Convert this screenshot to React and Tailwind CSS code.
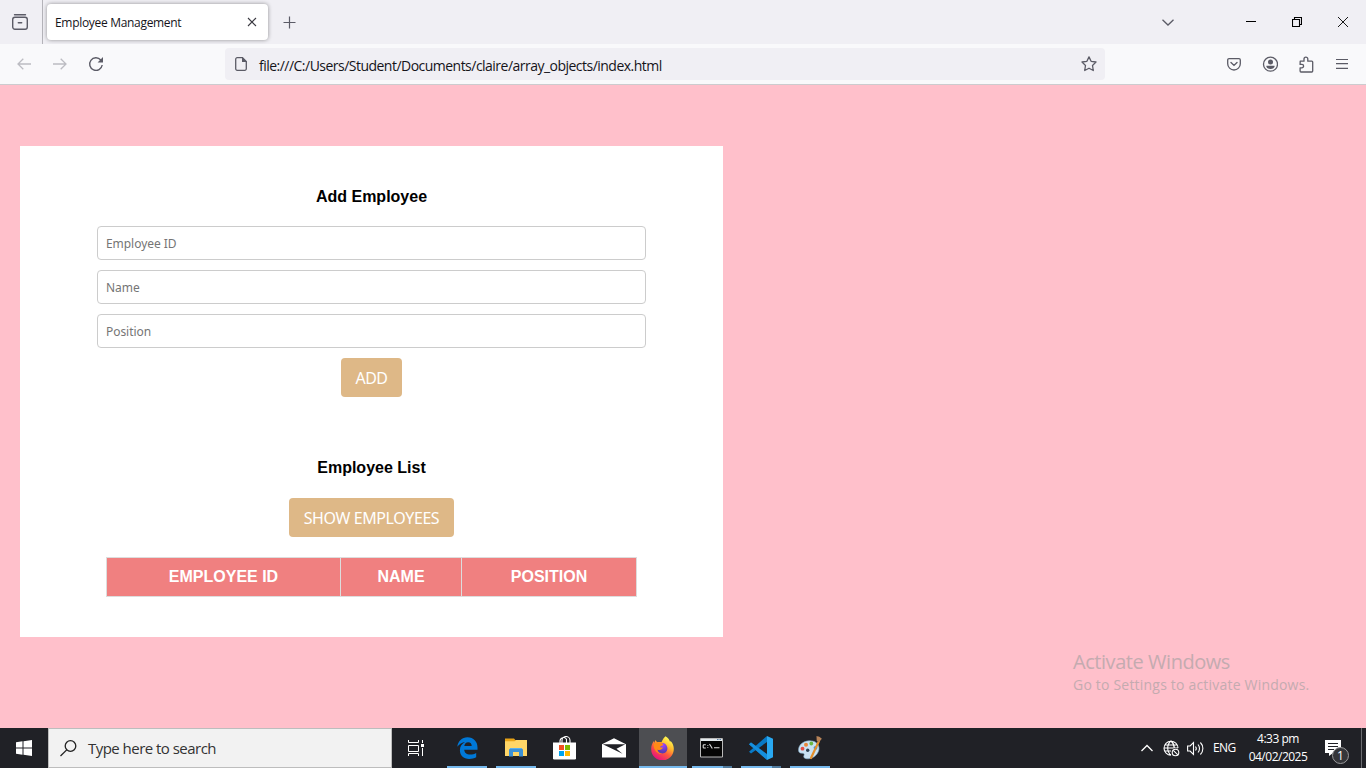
const ui = 'font-["Open_Sans",sans-serif]';

function Ico({ w, h, vb, className = "", children }) {
  return (
    <svg width={w} height={h} viewBox={vb || `0 0 ${w} ${h}`} className={`block shrink-0 ${className}`} fill="none">
      {children}
    </svg>
  );
}

function TabBar() {
  return (
    <div className="flex h-11 shrink-0 items-center bg-[#f0eff4]">
      <div className="flex h-full w-[43px] items-center border-r border-[#b4b3b9] pl-3">
        <Ico w={16} h={16} className="stroke-[#5b5b66]">
          <path d="M2.5 .8h11" strokeWidth="1.4" strokeLinecap="round" />
          <rect x=".7" y="3.2" width="14.6" height="12" rx="2.2" strokeWidth="1.4" />
          <path d="M6.3 8.7h3.4" strokeWidth="1.4" strokeLinecap="round" />
        </Ico>
      </div>
      <div className="ml-1 flex h-9 w-[221px] items-center rounded bg-white pl-2 shadow-[0_0_4px_rgba(0,0,0,0.4)]">
        <span className="w-[192px] whitespace-nowrap pt-[2px] text-[12px] tracking-[-0.31px] text-[#15141a]">Employee Management</span>
        <Ico w={10} h={10} className="stroke-[#3b3a42]">
          <path d="M1 1l8 8M9 1l-8 8" strokeWidth="1.1" />
        </Ico>
      </div>
      <Ico w={13} h={13} className="ml-[15px] stroke-[#5b5b66]">
        <path d="M6.5 .5v12M.5 6.5h12" strokeWidth="1.2" />
      </Ico>
      <Ico w={12} h={7} className="ml-auto stroke-[#5b5b66]">
        <path d="M.5 .8L6 6l5.500-5.200" strokeWidth="1.3" />
      </Ico>
      <Ico w={10} h={10} className="ml-[72px] stroke-black">
        <path d="M0 4.500h10" />
      </Ico>
      <Ico w={10} h={10} className="ml-9 stroke-black">
        <path d="M.5 2.500h7v7h-7zM2.500 2.500v-2h7v7h-2" strokeWidth="1.1" />
      </Ico>
      <Ico w={10} h={10} className="ml-9 mr-[18px] stroke-black">
        <path d="M0 0l10 10M10 0L0 10" strokeWidth=".9" />
      </Ico>
    </div>
  );
}

function NavBar() {
  return (
    <div className="flex h-[41px] shrink-0 items-center border-b border-[#cccccf] bg-[#f9f9fb]">
      <Ico w={14} h={12} className="ml-[17px] stroke-[#bcbcc2]">
        <path d="M14 6H1M6.300 .7L1 6l5.300 5.300" strokeWidth="1.300" />
      </Ico>
      <Ico w={14} h={12} className="ml-[22px] stroke-[#bcbcc2]">
        <path d="M0 6h13M7.700 .7L13 6l-5.300 5.300" strokeWidth="1.300" />
      </Ico>
      <Ico w={16} h={16} className="ml-[21px] stroke-[#5b5b66]">
        <path d="M12.800 4A6.300 6.300 0 1 0 14.200 9" strokeWidth="1.400" />
        <path d="M15 1v5.400H9.600z" fill="#5b5b66" stroke="none" />
      </Ico>
      <div className="ml-[121px] flex h-8 w-[880px] items-center rounded bg-[#f0eff4] pl-[10px]">
        <Ico w={12} h={14}>
          <path d="M2.200 .7h5.300l3.800 3.800v7.300a1.500 1.500 0 0 1-1.500 1.500H2.200A1.500 1.500 0 0 1 .7 11.800V2.200A1.500 1.500 0 0 1 2.200 .7z" stroke="#5b5b66" strokeWidth="1.300" />
          <path d="M7 0l5 5H7z" fill="#5b5b66" />
        </Ico>
        <span className="ml-3 whitespace-nowrap pt-[2px] text-[14px] tracking-[-0.52px] text-[#15141a]">
          file:///C:/Users/Student/Documents/claire/array_objects/index.html
        </span>
        <Ico w={16} h={16} className="ml-auto mr-2 stroke-[#5b5b66]">
          <path d="M8 .9l2.100 4.400 4.900.7-3.500 3.500.8 5-4.300-2.300-4.300 2.300.8-5L1 6l4.900-.7z" strokeWidth="1.300" strokeLinejoin="round" />
        </Ico>
      </div>
      <Ico w={14} h={13} className="ml-[122px] stroke-[#5b5b66]">
        <path d="M2 .7h10A1.300 1.300 0 0 1 13.300 2v3.700a6.300 6.300 0 0 1-12.600 0V2A1.300 1.300 0 0 1 2 .7z" strokeWidth="1.300" />
        <path d="M4 4.500l3 2.900 3-2.900" strokeWidth="1.400" strokeLinecap="round" />
      </Ico>
      <Ico w={16} h={16} className="ml-[21px]">
        <circle cx="8.5" cy="8.2" r="7" stroke="#5b5b66" strokeWidth="1.300" />
        <circle cx="8.5" cy="6" r="2.500" fill="#5b5b66" />
        <path d="M4.500 9.700h8c.4 1.800-1.500 3.300-4 3.300S4.100 11.500 4.500 9.700z" fill="#5b5b66" />
      </Ico>
      <Ico w={15} h={17} className="ml-[21px] stroke-[#5b5b66]">
        <path d="M1.200 5.200H5V3a1.800 1.800 0 0 1 3.800 0v2.200h4a.9.9 0 0 1 .9.900v9a.9.9 0 0 1-.9.900H2a.9.900 0 0 1-.9-.9v-3.300h1.800a1.700 1.700 0 0 0 0-3.400H1.100z" strokeWidth="1.300" strokeLinejoin="round" />
      </Ico>
      <Ico w={12} h={12} className="ml-[22px] stroke-[#5b5b66]">
        <path d="M0 1.500h12M0 5.700h12M0 10.300h12" strokeWidth="1.200" />
      </Ico>
    </div>
  );
}

const fields = ["Employee ID", "Name", "Position"];

function Button({ children, className }) {
  return (
    <button className={`flex h-[39px] items-center justify-center whitespace-nowrap rounded bg-[#deb887] font-["Noto_Sans",sans-serif] text-[16px] text-white ${className}`}>
      {children}
    </button>
  );
}

function Page() {
  return (
    <main className='relative flex min-h-0 flex-1 items-start bg-[#ffc0cb] pl-5 pt-[61px] font-["Liberation_Sans",Arial,sans-serif]'>
      <section className="flex h-[491px] w-[703px] flex-col items-center bg-white pt-[42px]">
        <h3 className="text-[16px] font-bold leading-[18px] text-black">Add Employee</h3>
        <div className="mt-5 flex w-[549px] flex-col gap-[10px]">
          {fields.map((f) => (
            <input
              key={f}
              placeholder={f}
              className='h-[34px] w-full rounded border border-[#cccccc] px-2 font-["Noto_Sans",sans-serif] text-[12px] tracking-[-0.05px] placeholder:text-[#757575]'
            />
          ))}
        </div>
        <Button className="mt-[10px] w-[61px] tracking-[-0.6px]">ADD</Button>
        <h3 className="mt-[62px] text-[16px] font-bold leading-[18px] text-black">Employee List</h3>
        <Button className="mt-[21px] w-[165px] tracking-[-0.4px]">SHOW EMPLOYEES</Button>
        <table className="mt-5 h-10 w-[531px] table-fixed border-collapse text-[16px] leading-[18px] text-white">
          <thead>
            <tr className="bg-[#f08080]">
              <th className="w-[234px] border border-[#dddddd] p-0">EMPLOYEE ID</th>
              <th className="w-[121px] border border-[#dddddd] p-0">NAME</th>
              <th className="border border-[#dddddd] p-0">POSITION</th>
            </tr>
          </thead>
        </table>
      </section>
      <div className={`absolute left-[1073px] top-[563px] whitespace-nowrap text-[#c4abb0] ${ui}`}>
        <div className="text-[20px] leading-[27px] tracking-[-0.45px]">Activate Windows</div>
        <div className="pt-px text-[14px] leading-[18px] tracking-[0.2px]">Go to Settings to activate Windows.</div>
      </div>
    </main>
  );
}

function Edge() {
  return (
    <Ico w={21} h={22}>
      <path d="M.3 9.800C1 4 5 .2 10.500 .2c6 0 10 4.300 10 10.200v2.300H7.200c.2 3.100 2.600 4.900 6 4.900 2.200 0 4.200-.6 6-1.700v4.400c-2 1.100-4.300 1.600-7 1.600-5.800 0-9.300-3.600-9.300-8.700 0-3.600 2-6.600 5.200-8.100C5.200 5.700 2.200 7.200.3 9.800zM7.300 9h7.400c0-2.300-1.200-3.800-3.500-3.800-2.200 0-3.600 1.500-3.900 3.800z" fill="#0078d7" />
    </Ico>
  );
}

function Explorer() {
  return (
    <Ico w={22} h={19}>
      <path d="M0 .5h9l1.500 1.700H22V18H0z" fill="#e8a317" />
      <path d="M0 3.200h9.500L11 2h11v16H0z" fill="#ffd667" />
      <path d="M4 18.500v-6.500A1.500 1.500 0 0 1 5.500 10.500h11A1.500 1.500 0 0 1 18 12v6.500h-4V14H8v4.500z" fill="#3c91d6" />
      <path d="M5 10.500h12" stroke="#58b0ee" />
    </Ico>
  );
}

function Store() {
  return (
    <Ico w={24} h={24}>
      <path d="M7 7V4.800a3.500 3.500 0 0 1 6.500-1.500V7M9 7V4.500a4 4 0 0 1 8 0V7" stroke="#fff" strokeWidth="1.100" />
      <path d="M0 6.500h23v15.700a1.300 1.300 0 0 1-1.300 1.300H1.300A1.300 1.300 0 0 1 0 22.200z" fill="#fff" />
      <path d="M6 9h5v5H6z" fill="#f25022" />
      <path d="M12 9h5v5h-5z" fill="#7fba00" />
      <path d="M6 15h5v5H6z" fill="#00a4ef" />
      <path d="M12 15h5v5h-5z" fill="#ffb900" />
    </Ico>
  );
}

function Mail() {
  return (
    <Ico w={24} h={20}>
      <path d="M0 6.200L12 .3l12 5.900v13.300H0z" fill="#fff" />
      <path d="M.8 6.200h22.500L14.500 10.800l6 5z" fill="#202126" />
    </Ico>
  );
}

function Firefox() {
  return (
    <Ico w={24} h={24} vb="0 0 24 24">
      <defs>
        <linearGradient id="ffBody" x1="18" y1="2" x2="5" y2="22" gradientUnits="userSpaceOnUse">
          <stop offset=".05" stopColor="#fff44f" />
          <stop offset=".35" stopColor="#ffb42b" />
          <stop offset=".62" stopColor="#ff5a3c" />
          <stop offset="1" stopColor="#e8147b" />
        </linearGradient>
        <radialGradient id="ffGlobe" cx="12" cy="9" r="7" gradientUnits="userSpaceOnUse">
          <stop stopColor="#a044ff" />
          <stop offset="1" stopColor="#5b3bb4" />
        </radialGradient>
      </defs>
      <path d="M14.500 .3c2.600 1.500 4 3.500 4.400 5.200l.9-.3c2 2 3.100 5 3 7.800A11.300 11.300 0 0 1 .2 13.200C.1 9.900 1.300 7 3 5l.7 2 .5-3 2 2.300c1.500-.7 3-.4 4.300 0 1-2.700 2.300-4.400 4-6z" fill="url(#ffBody)" />
      <path d="M9 7.600c3.200-1.700 6.800.4 7.300 3.900.6 3.500-2 6-5 5.900-3.300 0-5.300-2.100-5-4.700 1.100.8 2.300.6 3.900-.5-1.400-.2-2.400-.5-2.700-1.300.6-.5 2.500-.7 3.200-1.700-.4-.5-1-.9-1.700-1.600z" fill="url(#ffGlobe)" />
      <path d="M2.500 8.500C4.500 6 7.800 6 10.500 6.500L12.300 8.400c-.2 1.300-2.300 1.500-3.300 2.300.2.800 1.400 1 3 .9-1 2.300-3.600 3.200-5.700 1.800.4 2.400 2.300 4.300 5.300 4.500-4 1-9-3-9.100-9.400z" fill="#ff8a16" />
    </Ico>
  );
}

function Cmd() {
  return (
    <Ico w={24} h={20}>
      <path d="M.5 .5h22v18.500H.5z" fill="#050505" stroke="#b9b9b9" />
      <path d="M1 1h21v2H1z" fill="#e3e9ed" />
      <path d="M17 1.500h4" stroke="#5b7fa5" strokeDasharray="1 .5" />
      <path d="M5.800 6.800H4a.8.8 0 0 0-.8.8v1.600a.8.800 0 0 0 .8.8h1.800M7.800 6.900v.9M7.800 9.200v.9M9.500 6l2.800 4.500M14 9.700h5.500" stroke="#ddd" strokeWidth="1.100" />
    </Ico>
  );
}

function Code() {
  return (
    <Ico w={24} h={24}>
      <path d="M18 0l6 2.800v18.400L18 24z" fill="#29a9f2" />
      <path d="M0 8.300l2-1.700L18 18v6z" fill="#0a7fd0" />
      <path d="M0 15.700l2 1.700L18 6V0z" fill="#087ac7" />
      <path d="M0 8.300l2-1.700 16 11.800v5.400z" fill="#168fdd" />
    </Ico>
  );
}

function Paint() {
  return (
    <Ico w={24} h={24}>
      <path d="M11 4.800c5.800-.3 9.500 2.500 10 7 .4 5-4.500 10.700-10.500 11-3.300.2-5.500-1.100-4.600-3.100.9-1.900-.1-2.600-2.100-2.500-2.200.1-3.400-1-3.300-3.400C.7 9 5 5.100 11 4.800z" fill="#c9e2f3" stroke="#7fa7c4" strokeWidth=".6" />
      <circle cx="8" cy="8.700" r="2" fill="#e8873b" />
      <circle cx="13.300" cy="7.500" r="1.900" fill="#6ab743" />
      <circle cx="4.500" cy="12.700" r="1.900" fill="#e64c43" />
      <circle cx="17.500" cy="11.800" r="1.900" fill="#3e8fd8" />
      <circle cx="9.700" cy="14.200" r="1.700" fill="#2d4154" />
      <path d="M21 5L13 22" stroke="#e38f2c" strokeWidth="2.200" strokeLinecap="round" />
      <path d="M18.500 0c1.200.8 2 0 3.200 1l2.200 1.800-3 3.500-2.200-1.500z" fill="#b78358" />
    </Ico>
  );
}

const apps = [
  { Icon: Edge, bar: "full" },
  { Icon: Explorer, bar: "full" },
  { Icon: Store },
  { Icon: Mail },
  { Icon: Firefox, bar: "active" },
  { Icon: Cmd, bar: "split" },
  { Icon: Code, bar: "split" },
  { Icon: Paint, bar: "full" },
];

function TaskButton({ Icon, bar }) {
  return (
    <div className={`flex h-10 w-12 shrink-0 flex-col items-center ${bar === "active" ? "bg-[#4d4e52]" : ""}`}>
      <div className="flex h-[38px] items-center pt-px">
        <Icon />
      </div>
      {bar === "active" && <div className="h-0.5 w-12 bg-[#76b9ed]" />}
      {bar === "full" && <div className="h-0.5 w-10 bg-[#76b9ed]" />}
      {bar === "split" && (
        <div className="flex h-0.5 w-10">
          <div className="w-[31px] bg-[#76b9ed]" />
          <div className="w-[9px] bg-[#517b9d]" />
        </div>
      )}
    </div>
  );
}

function Taskbar() {
  return (
    <footer className="flex h-10 shrink-0 items-center bg-[#202126] text-white">
      <div className="flex w-12 justify-center">
        <Ico w={16} h={16}>
          <path d="M0 2.200L6.500 1.300v6.200H0zM7.500 1.200L16 0v7.500H7.500zM0 8.500h6.500v6.200L0 13.800zM7.500 8.500H16V16l-8.500-1.200z" fill="#fff" />
        </Ico>
      </div>
      <div className="flex h-10 w-[344px] items-center border border-[#bdbdbd] bg-[#f2f2f2] pl-[11px]">
        <Ico w={17} h={17} className="stroke-[#222]">
          <circle cx="10.500" cy="6" r="5.300" strokeWidth="1.300" />
          <path d="M6.700 9.900L.5 16" strokeWidth="1.300" />
        </Ico>
        <span className="ml-[11px] whitespace-nowrap text-[15px] tracking-[-0.53px] text-[#333]">Type here to search</span>
      </div>
      <div className="mr-[3px] flex w-12 justify-center">
        <Ico w={16} h={16} className="stroke-white">
          <path d="M.5 0v2.500h10V0M.5 5.500h10v6H.5zM.5 16v-2.500h10V16M14.500 0v3M14.500 8v8" />
          <path d="M13 4h3v3h-3z" fill="#fff" stroke="none" />
        </Ico>
      </div>
      <div className="flex gap-px">
        {apps.map((a, i) => (
          <TaskButton key={i} {...a} />
        ))}
      </div>
      <Ico w={12} h={8} className="ml-auto stroke-white">
        <path d="M.5 7L6 1.500 11.500 7" strokeWidth="1.300" />
      </Ico>
      <Ico w={17} h={17} className="ml-[10px] stroke-white">
        <path d="M8 15.200A7 7 0 1 1 15 8M8 15.200C5.500 13.200 4.700 11 4.700 8S5.500 3 8 1M8 1c2.300 2 3.300 4 3.300 7M1.500 5h13M1.500 11H8M1 8h14" strokeWidth="1.100" />
        <circle cx="12.500" cy="12.500" r="4.300" fill="#202126" stroke="none" />
        <circle cx="12.500" cy="12.500" r="3.300" strokeWidth="1.100" />
        <path d="M10.300 10.300l4.500 4.500" strokeWidth="1.100" />
      </Ico>
      <Ico w={17} h={15} className="ml-[7px] stroke-white">
        <path d="M.6 5h2.500L6.500 1.500v12L3.100 10H.6z" strokeWidth="1.100" />
        <path d="M8.500 5.500c.8 1 .8 3 0 4M11 3.500c2 2.200 2 5.800 0 8M13.400 1.500c3.300 3.400 3.300 8.600 0 12" strokeWidth="1.100" />
      </Ico>
      <span className="ml-[9px] w-6 whitespace-nowrap text-[12px] tracking-[-0.6px]">ENG</span>
      <div className="ml-[9px] w-[64px] whitespace-nowrap text-center text-[12px] leading-[18px] tracking-[-0.5px]">
        <div>4:33 pm</div>
        <div>04/02/2025</div>
      </div>
      <div className="relative ml-[15px] mr-[11px] h-[26px] w-[25px] translate-y-[5px]">
        <Ico w={25} h={26}>
          <path d="M0 0h16v13H8l-4 3v-3H0z" fill="#fff" />
          <path d="M3 3.500h10M3 6.500h10M3 9.500h6" stroke="#202126" />
          <circle cx="15.500" cy="15.500" r="8" fill="#35363a" stroke="#9a9a9c" />
        </Ico>
        <span className="absolute left-[7px] top-[7px] w-[17px] text-center text-[12px] leading-[17px]">1</span>
      </div>
      <div className="mr-1 h-full w-px bg-[#6b6c70]" />
    </footer>
  );
}

export default function App() {
  return (
    <div className={`flex h-[768px] w-[1366px] flex-col overflow-hidden ${ui}`}>
      <TabBar />
      <NavBar />
      <Page />
      <Taskbar />
    </div>
  );
}
